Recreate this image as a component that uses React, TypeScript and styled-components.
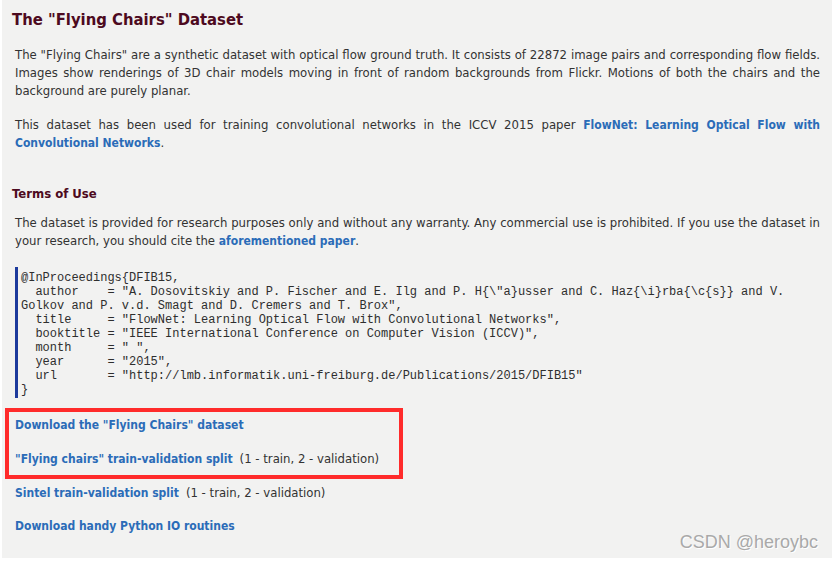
import React from "react";
import styled, { createGlobalStyle } from "styled-components";

const GlobalStyle = createGlobalStyle`
  html, body {
    margin: 0;
    padding: 0;
    background: #ffffff;
  }
  #root {
    min-height: 561px;
  }
`;

const bibtex = `@InProceedings{DFIB15,
  author    = "A. Dosovitskiy and P. Fischer and E. Ilg and P. H{\\"a}usser and C. Haz{\\i}rba{\\c{s}} and V.
Golkov and P. v.d. Smagt and D. Cremers and T. Brox",
  title     = "FlowNet: Learning Optical Flow with Convolutional Networks",
  booktitle = "IEEE International Conference on Computer Vision (ICCV)",
  month     = " ",
  year      = "2015",
  url       = "http://lmb.informatik.uni-freiburg.de/Publications/2015/DFIB15"
}`;

export default function App() {
  return (
    <>
      <GlobalStyle />
      <Page>
        <Content>
          <Title>The "Flying Chairs" Dataset</Title>
          <Paragraph $top={14}>
            The "Flying Chairs" are a synthetic dataset with optical flow ground
            truth. It consists of 22872 image pairs and corresponding flow
            fields. Images show renderings of 3D chair models moving in front of
            random backgrounds from Flickr. Motions of both the chairs and the
            background are purely planar.
          </Paragraph>
          <Paragraph $top={16}>
            This dataset has been used for training convolutional networks in
            the ICCV 2015 paper{" "}
            <Link href="#">
              FlowNet: Learning Optical Flow with Convolutional Networks
            </Link>
            .
          </Paragraph>
          <Subtitle>Terms of Use</Subtitle>
          <Paragraph $top={10}>
            The dataset is provided for research purposes only and without any
            warranty. Any commercial use is prohibited. If you use the dataset
            in your research, you should cite the{" "}
            <Link href="#">aforementioned paper</Link>.
          </Paragraph>
          <Code>{bibtex}</Code>
          <Highlight>
            <LinkRow>
              <Link href="#">Download the "Flying Chairs" dataset</Link>
            </LinkRow>
            <LinkRow>
              <Link href="#">"Flying chairs" train-validation split</Link>
              <Note>(1 - train, 2 - validation)</Note>
            </LinkRow>
          </Highlight>
          <LinkList>
            <LinkRow>
              <Link href="#">Sintel train-validation split</Link>
              <Note>(1 - train, 2 - validation)</Note>
            </LinkRow>
            <LinkRow>
              <Link href="#">Download handy Python IO routines</Link>
            </LinkRow>
          </LinkList>
        </Content>
        <Watermark>CSDN @heroybc</Watermark>
      </Page>
    </>
  );
}

const Page = styled.div`
  position: relative;
  height: 558px;
  margin-left: 2px;
  background: #f2f2f1;
  overflow: hidden;
  font-family: "DejaVu Sans Condensed", "Liberation Sans", sans-serif;
  color: #333333;
`;

const Content = styled.div`
  padding: 8px 12px 0 13px;
`;

const Title = styled.h1`
  margin: 0 0 0 -3px;
  font-size: 16.5px;
  line-height: 24px;
  font-weight: bold;
  color: #4d0a20;
`;

const Paragraph = styled.p<{ $top: number }>`
  margin: ${(p) => p.$top}px 0 0;
  font-size: 13px;
  line-height: 18px;
  text-align: justify;
`;

const Subtitle = styled.h2`
  margin: 32px 0 0 -3px;
  font-size: 13px;
  line-height: 20px;
  font-weight: bold;
  color: #4d0a20;
`;

const Link = styled.a`
  color: #2b6cb8;
  font-weight: bold;
  font-size: 12px;
  text-decoration: none;
`;

const Code = styled.pre`
  margin: 17px 0 0;
  padding: 4px 0 1px 3px;
  border-left: 3px solid #1d3a9c;
  font-family: "Liberation Mono", "Courier New", monospace;
  font-size: 12px;
  line-height: 14px;
  color: #2e2e2e;
  white-space: pre;
`;

const Highlight = styled.div`
  box-sizing: border-box;
  width: 398px;
  margin: 10px 0 0 -10px;
  padding: 4px 6px 7px;
  border: 4px solid #ff2b2b;
  display: flex;
  flex-direction: column;
  gap: 16px;
`;

const LinkList = styled.div`
  margin-top: 5px;
  display: flex;
  flex-direction: column;
  gap: 15px;
`;

const LinkRow = styled.div`
  font-size: 13px;
  line-height: 18px;
  white-space: nowrap;
`;

const Note = styled.span`
  margin-left: 7px;
  font-size: 13px;
  color: #333333;
`;

const Watermark = styled.div`
  position: absolute;
  right: 14px;
  bottom: 5px;
  font-family: "Liberation Sans", Arial, sans-serif;
  font-size: 18px;
  color: #a9a9a9;
  text-shadow: 1px 1px 0 #ffffff;
`;
